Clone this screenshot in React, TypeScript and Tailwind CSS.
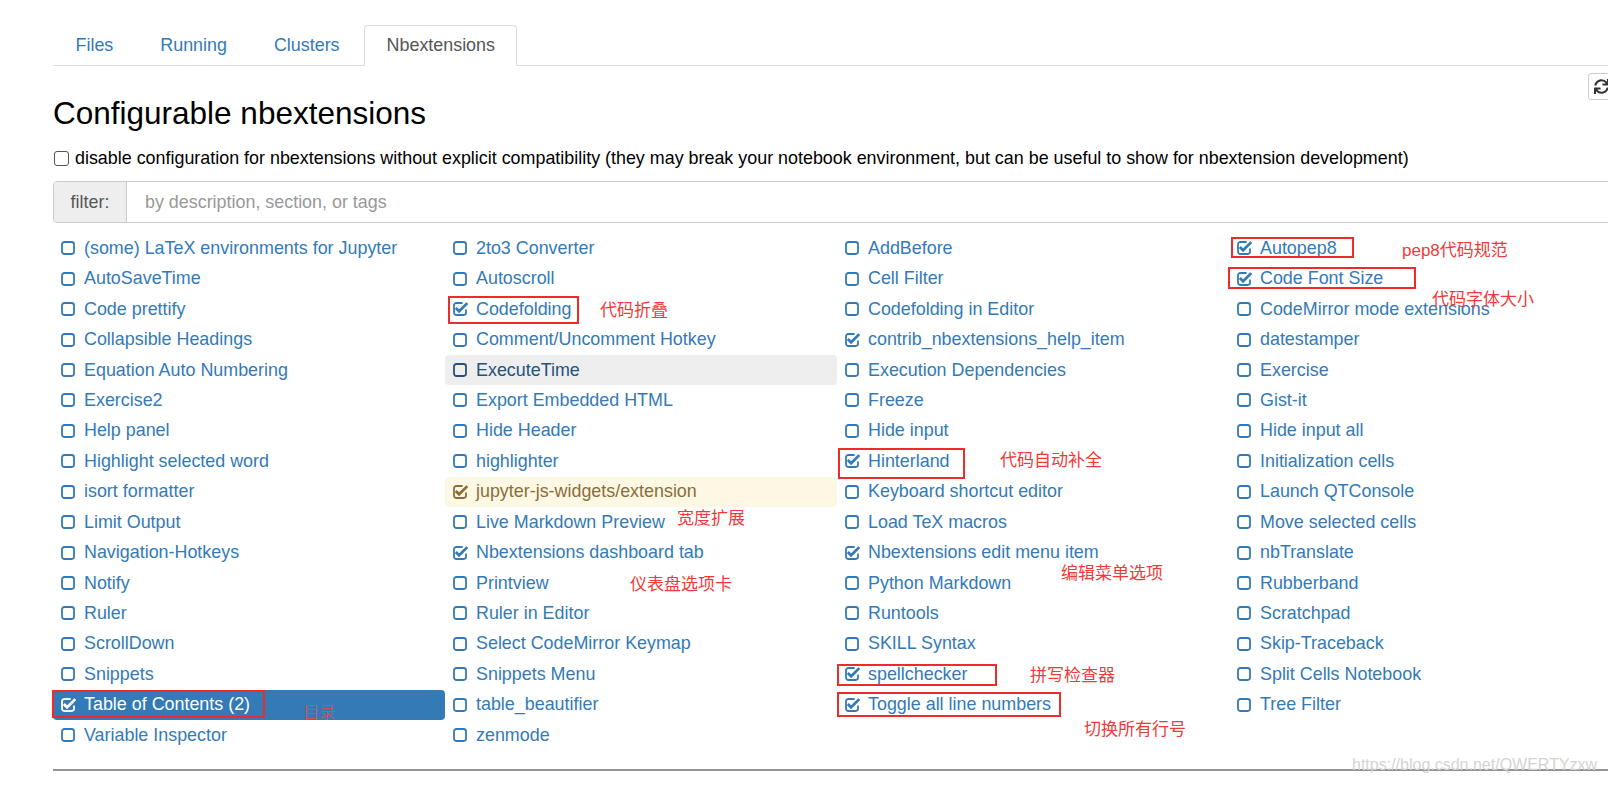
import { FaSync } from 'react-icons/fa'

type Item = { label: string; checked?: boolean; state?: 'hover' | 'warn' | 'active' }

const columns: Item[][] = [
  [
    { label: '(some) LaTeX environments for Jupyter' },
    { label: 'AutoSaveTime' },
    { label: 'Code prettify' },
    { label: 'Collapsible Headings' },
    { label: 'Equation Auto Numbering' },
    { label: 'Exercise2' },
    { label: 'Help panel' },
    { label: 'Highlight selected word' },
    { label: 'isort formatter' },
    { label: 'Limit Output' },
    { label: 'Navigation-Hotkeys' },
    { label: 'Notify' },
    { label: 'Ruler' },
    { label: 'ScrollDown' },
    { label: 'Snippets' },
    { label: 'Table of Contents (2)', checked: true, state: 'active' },
    { label: 'Variable Inspector' },
  ],
  [
    { label: '2to3 Converter' },
    { label: 'Autoscroll' },
    { label: 'Codefolding', checked: true },
    { label: 'Comment/Uncomment Hotkey' },
    { label: 'ExecuteTime', state: 'hover' },
    { label: 'Export Embedded HTML' },
    { label: 'Hide Header' },
    { label: 'highlighter' },
    { label: 'jupyter-js-widgets/extension', checked: true, state: 'warn' },
    { label: 'Live Markdown Preview' },
    { label: 'Nbextensions dashboard tab', checked: true },
    { label: 'Printview' },
    { label: 'Ruler in Editor' },
    { label: 'Select CodeMirror Keymap' },
    { label: 'Snippets Menu' },
    { label: 'table_beautifier' },
    { label: 'zenmode' },
  ],
  [
    { label: 'AddBefore' },
    { label: 'Cell Filter' },
    { label: 'Codefolding in Editor' },
    { label: 'contrib_nbextensions_help_item', checked: true },
    { label: 'Execution Dependencies' },
    { label: 'Freeze' },
    { label: 'Hide input' },
    { label: 'Hinterland', checked: true },
    { label: 'Keyboard shortcut editor' },
    { label: 'Load TeX macros' },
    { label: 'Nbextensions edit menu item', checked: true },
    { label: 'Python Markdown' },
    { label: 'Runtools' },
    { label: 'SKILL Syntax' },
    { label: 'spellchecker', checked: true },
    { label: 'Toggle all line numbers', checked: true },
  ],
  [
    { label: 'Autopep8', checked: true },
    { label: 'Code Font Size', checked: true },
    { label: 'CodeMirror mode extensions' },
    { label: 'datestamper' },
    { label: 'Exercise' },
    { label: 'Gist-it' },
    { label: 'Hide input all' },
    { label: 'Initialization cells' },
    { label: 'Launch QTConsole' },
    { label: 'Move selected cells' },
    { label: 'nbTranslate' },
    { label: 'Rubberband' },
    { label: 'Scratchpad' },
    { label: 'Skip-Traceback' },
    { label: 'Split Cells Notebook' },
    { label: 'Tree Filter' },
  ],
]

// red marks drawn over the screenshot
const boxes = [
  'left-[448px] top-[296px] w-[131px] h-[28px]',
  'left-[1231px] top-[237px] w-[123px] h-[21px]',
  'left-[1228px] top-[267px] w-[188px] h-[22px]',
  'left-[838px] top-[448px] w-[127px] h-[31px]',
  'left-[837px] top-[664px] w-[160px] h-[22px]',
  'left-[837px] top-[692px] w-[224px] h-[25px]',
  'left-[52px] top-[690px] w-[213px] h-[28px]',
]

const notes = [
  { text: '代码折叠', pos: 'left-[600px] top-[301px]' },
  { text: 'pep8代码规范', pos: 'left-[1402px] top-[241px]' },
  { text: '代码字体大小', pos: 'left-[1432px] top-[290px]' },
  { text: '代码自动补全', pos: 'left-[1000px] top-[451px]' },
  { text: '宽度扩展', pos: 'left-[677px] top-[509px]' },
  { text: '仪表盘选项卡', pos: 'left-[630px] top-[575px]' },
  { text: '编辑菜单选项', pos: 'left-[1061px] top-[564px]' },
  { text: '拼写检查器', pos: 'left-[1030px] top-[666px]' },
  { text: '切换所有行号', pos: 'left-[1084px] top-[720px]' },
]

function Box({ checked }: { checked?: boolean }) {
  if (checked) {
    return (
      <svg viewBox="0 0 14 14" className="h-[14px] w-[14px] shrink-0 overflow-visible" fill="none" stroke="currentColor">
        <path d="M9.6 1H3.4A2.4 2.4 0 0 0 1 3.4v7.2A2.4 2.4 0 0 0 3.4 13h7.2a2.4 2.4 0 0 0 2.4-2.4V7.6" strokeWidth="1.8" />
        <path d="M2.8 6l3.3 3.3 8.2-8.2" strokeWidth="2.7" />
      </svg>
    )
  }
  return (
    <svg viewBox="0 0 14 14" className="h-[14px] w-[14px] shrink-0" fill="none" stroke="currentColor">
      <rect x="1" y="1" width="12" height="12" rx="2.4" strokeWidth="1.8" />
    </svg>
  )
}

function Row({ item }: { item: Item }) {
  let tone = 'text-[#337ab7]'
  if (item.state === 'active') tone = 'bg-[#337ab7] text-white'
  if (item.state === 'hover') tone = 'bg-[#eeeeee] text-[#23527c]'
  if (item.state === 'warn') tone = 'bg-[#fcf8e3] text-[#8a6d3b]'
  return (
    <div className={`flex h-[30.45px] items-center gap-[9px] rounded-[4px] pl-2 ${tone}`}>
      <Box checked={item.checked} />
      <span className="whitespace-nowrap">{item.label}</span>
    </div>
  )
}

export default function App() {
  const tabs = ['Files', 'Running', 'Clusters']

  return (
    <div className="relative h-[786px] w-[1608px] overflow-hidden bg-white font-['Liberation_Sans',Arial,sans-serif] text-[17.9px] text-black">
      <div className="ml-[53px] w-[1568px] pt-[25px]">
        <div className="flex border-b border-[#dddddd]">
          {tabs.map((t) => (
            <div key={t} className="-mb-px mr-[2px] flex h-[41px] items-center rounded-t-[4px] border border-transparent px-[21.5px] text-[#337ab7]">
              {t}
            </div>
          ))}
          <div className="-mb-px flex h-[41px] items-center rounded-t-[4px] border border-[#dddddd] border-b-white bg-white px-[21.5px] text-[#555555]">
            Nbextensions
          </div>
        </div>

        <div className="flex items-start justify-between">
          <h1 className="mt-[29px] text-[31.5px] leading-[36px] font-normal">Configurable nbextensions</h1>
          <button className="mt-[7px] flex h-[27px] w-[33px] items-center rounded-[3px] border border-[#cccccc] bg-white pl-[5px] text-[#333333]">
            <FaSync className="h-[15px] w-[15px]" />
          </button>
        </div>

        <label className="mt-[15px] flex h-[25px] items-center gap-[6px]">
          <span className="ml-px h-[15px] w-[15px] rounded-[3px] border-[1.5px] border-[#555555] bg-white" />
          <span>
            disable configuration for nbextensions without explicit compatibility (they may break your notebook environment, but can be useful to show for nbextension development)
          </span>
        </label>

        <div className="mt-[10px] flex h-[42px] overflow-hidden rounded-[4px] border border-[#cccccc]">
          <div className="flex w-[73px] items-center justify-center border-r border-[#cccccc] bg-[#eeeeee] text-[#555555]">filter:</div>
          <div className="flex flex-1 items-center pl-[18px] text-[#999999]">by description, section, or tags</div>
        </div>

        <div className="mt-[10px] flex">
          {columns.map((col, i) => (
            <div key={i} className="flex w-[392px] flex-col">
              {col.map((item) => (
                <Row key={item.label} item={item} />
              ))}
            </div>
          ))}
        </div>

        <div className="mt-[19px] border-t-2 border-[#949494]" />
      </div>

      {boxes.map((b) => (
        <div key={b} className={`absolute border-2 border-[#ee2b2b] ${b}`} />
      ))}
      {notes.map((n) => (
        <div
          key={n.text}
          className={`absolute whitespace-nowrap font-['Liberation_Sans','Noto_Sans_CJK_SC',sans-serif] text-[17px] leading-[20px] text-[#f03a3a] ${n.pos}`}
        >
          {n.text}
        </div>
      ))}
      <div className="absolute left-[303px] top-[702px] font-['Noto_Sans_CJK_SC',sans-serif] text-[16px] leading-[18px] font-light text-[#f04545]">目录</div>
      <div className="absolute left-[1352px] top-[755px] whitespace-nowrap text-[16px] leading-[20px] text-[#d4d4d4]">https://blog.csdn.net/QWERTYzxw</div>
    </div>
  )
}
